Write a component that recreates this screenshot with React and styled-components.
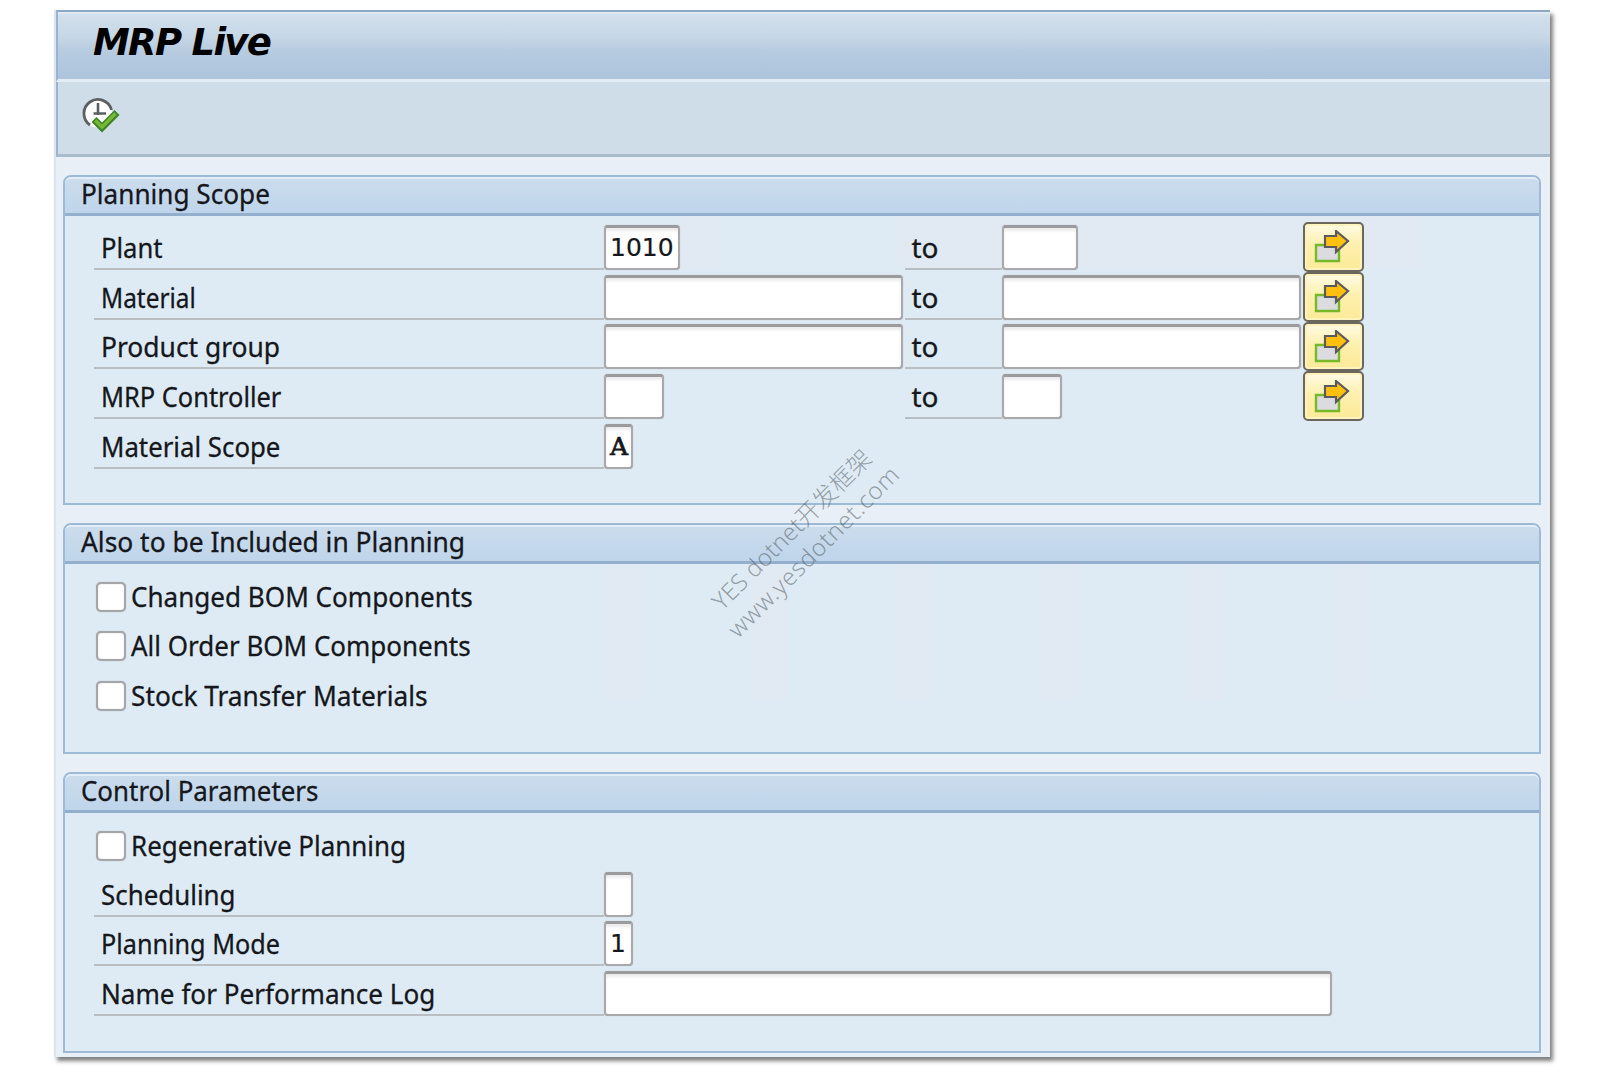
import React from "react";
import styled, { createGlobalStyle } from "styled-components";

const GlobalStyle = createGlobalStyle`
  * {
    box-sizing: border-box;
  }

  body {
    margin: 0;
    background: #ffffff;
    overflow: hidden;
  }
`;

const Page = styled.div`
  width: 1600px;
  height: 1077px;
  padding: 10px 50px 20px 54px;
  font-family: "Noto Sans", sans-serif;
  font-size: 28px;
  color: #15171c;
`;

const Window = styled.div`
  position: relative;
  width: 1496px;
  height: 1047px;
  border-left: 2px solid #dde3ef;
  background: #e8eff7;
  box-shadow: 3px 4px 4px rgba(0, 0, 0, 0.5);
`;

const TitleBar = styled.div`
  height: 72px;
  border-top: 2px solid #8ba9c0;
  border-left: 2px solid #9ab4cd;
  border-bottom: 3px solid #e2ecf4;
  background: linear-gradient(#e2ecf5 0, #d2e0ec 3px, #c5d6e5 26px, #b6cbe0 40px, #adc4dc 100%);
`;

const Title = styled.h1`
  margin: 0;
  padding: 9px 0 0 35px;
  font-family: "DejaVu Sans", sans-serif;
  font-size: 37px;
  font-weight: bold;
  font-style: oblique;
  line-height: 44px;
  letter-spacing: -1.7px;
  color: #000000;
`;

const Toolbar = styled.div`
  height: 75px;
  padding: 15px 0 0 24px;
  border-left: 2px solid #9ab4cd;
  border-bottom: 3px solid #a9bccb;
  background: #cfdde8;
`;

const Groups = styled.div`
  display: flex;
  flex-direction: column;
  gap: 18px;
  padding: 18px 9px 0 7px;
`;

const Group = styled.section`
  height: ${(props) => props.$height}px;
  border: 2px solid #9dbad7;
  border-radius: 8px 8px 0 0;
  background: #deebf4;
`;

const GroupTitle = styled.div`
  height: 39px;
  padding-left: 16px;
  border-top: 2px solid #e2edf7;
  border-bottom: 3px solid #93afcd;
  border-radius: 6px 6px 0 0;
  background: linear-gradient(#cbdcec, #bfd5eb);
  line-height: 29px;
  white-space: nowrap;
`;

const Rows = styled.div`
  padding: 4px 0 0 29px;
`;

const TintedSelectRows = styled(Rows)`
  background:
    linear-gradient(#e1e9f3, #e1e9f3) 616px 0 / 40px 52px no-repeat,
    linear-gradient(#e1e9f3, #e1e9f3) 832px 0 / 524px 52px no-repeat;
`;

const StripedRows = styled(Rows)`
  background: repeating-linear-gradient(90deg, #e1e9f3 0 37px, transparent 37px 145.7px) 540px 0 / 766px 136px
    no-repeat;
`;

const Row = styled.div`
  display: flex;
  align-items: flex-end;
  height: 49.75px;
`;

const Label = styled.div`
  width: ${(props) => props.$width}px;
  height: 46px;
  padding-left: ${(props) => props.$indent || 7}px;
  border-bottom: 2px solid #b9bec2;
  line-height: 47px;
  white-space: nowrap;
`;

const Text = styled.span`
  display: inline-block;
  white-space: nowrap;
  transform: scaleX(${(props) => props.$stretch || 1});
  transform-origin: left center;
  -webkit-text-stroke: 0.3px #15171c;
`;

const Slot = styled.div`
  width: ${(props) => props.$width}px;
`;

const Field = styled.div`
  width: ${(props) => props.$width}px;
  height: 45px;
  padding-left: 4px;
  border: 2px solid #a9a9ab;
  border-top: 3px solid #9b9b9d;
  border-radius: 4px;
  background: #ffffff;
  box-shadow:
    0 0 1px #a9a9ab,
    inset 0 3px 3px #ececee;
  font-family: ${(props) => (props.$serif ? '"DejaVu Serif", serif' : '"DejaVu Sans", sans-serif')};
  font-size: 25px;
  line-height: 40px;
  -webkit-text-stroke: ${(props) => (props.$serif ? 0.7 : 0.2)}px #15171c;
`;

const MoreButton = styled.button`
  position: relative;
  top: 2px;
  display: flex;
  align-items: center;
  justify-content: center;
  width: 61px;
  height: 49.75px;
  padding: 1px 4px 0 0;
  border: 2.5px solid #6b675c;
  border-radius: 5px;
  background: linear-gradient(#fffbe6, #fdf0ae 45%, #fdea98);
  box-shadow: inset 0 0 0 2px #fff3bd;
`;

const CheckRow = styled.div`
  display: flex;
  align-items: flex-start;
  height: 49.75px;
  padding: 13.5px 0 0 2px;
  line-height: 28px;
`;

const CheckBox = styled.div`
  width: 30px;
  height: 30px;
  margin-right: 5px;
  border: 2px solid #a6a6a8;
  border-radius: 5px;
  background: #ffffff;
  box-shadow:
    0 0 1px #a6a6a8,
    inset 0 0 1px #a6a6a8;
`;

const Watermark = styled.div`
  position: absolute;
  left: 606px;
  top: 499px;
  width: 280px;
  transform: rotate(-45deg);
  font-family: "Noto Sans", "Noto Sans CJK SC", sans-serif;
  font-weight: 300;
  font-size: 24px;
  line-height: 31px;
  text-align: center;
  white-space: nowrap;
  color: rgba(75, 85, 90, 0.52);
`;

const Site = styled.div`
  letter-spacing: 0.7px;
`;

const ExecuteIcon = () => (
  <svg width="38" height="38" viewBox="0 0 38 38" fill="none">
    <circle cx="16" cy="16.5" r="14" fill="#fff" />
    <path d="M8 28A14 14 0 1 1 29.5 13" stroke="#5d6063" strokeWidth="2.8" />
    <path d="M16 6v12M11.5 16.5h12.5" stroke="#5d6063" strokeWidth="2.6" />
    <path d="M12 22.5l8 8 15-15" stroke="#3f8424" strokeWidth="7" />
    <path d="M13.3 23.5l6.7 6.5 13.5-13.5" stroke="#74b93a" strokeWidth="3.5" />
  </svg>
);

const MoreIcon = () => (
  <svg width="36" height="34" viewBox="0 0 36 34">
    <path d="M2 15h23v16H2z" fill="#dcdce0" stroke="#76b82a" strokeWidth="2.4" />
    <path d="M11 6h11V1l12 10-12 11v-5H11z" fill="#fdc010" stroke="#5b5a5c" strokeWidth="2.2" />
  </svg>
);

const SelectRow = ({ label, stretch, value, width }) => (
  <Row>
    <Label $width={510}>
      <Text $stretch={stretch}>{label}</Text>
    </Label>
    <Slot $width={301}>
      <Field $width={width}>{value}</Field>
    </Slot>
    <Label $width={97} $indent={6.5}>
      <Text>to</Text>
    </Label>
    <Slot $width={301}>
      <Field $width={width} />
    </Slot>
    <MoreButton>
      <MoreIcon />
    </MoreButton>
  </Row>
);

const SingleRow = ({ label, stretch, value, width, serif }) => (
  <Row>
    <Label $width={510}>
      <Text $stretch={stretch}>{label}</Text>
    </Label>
    <Field $width={width} $serif={serif}>
      {value}
    </Field>
  </Row>
);

const Check = ({ label, stretch }) => (
  <CheckRow>
    <CheckBox />
    <Text $stretch={stretch}>{label}</Text>
  </CheckRow>
);

const App = () => {
  return (
    <>
      <GlobalStyle />
      <Page>
        <Window>
          <TitleBar>
            <Title>MRP Live</Title>
          </TitleBar>
          <Toolbar>
            <ExecuteIcon />
          </Toolbar>
          <Groups>
            <Group $height={330}>
              <GroupTitle>
                <Text $stretch={0.934}>Planning Scope</Text>
              </GroupTitle>
              <TintedSelectRows>
                <SelectRow label="Plant" stretch={0.915} value="1010" width={76} />
                <SelectRow label="Material" stretch={0.872} width={299} />
                <SelectRow label="Product group" stretch={0.943} width={299} />
                <SelectRow label="MRP Controller" stretch={0.907} width={60} />
                <SingleRow label="Material Scope" stretch={0.921} value="A" width={29} serif />
              </TintedSelectRows>
            </Group>
            <Group $height={231}>
              <GroupTitle>
                <Text $stretch={0.942}>Also to be Included in Planning</Text>
              </GroupTitle>
              <StripedRows>
                <Check label="Changed BOM Components" stretch={0.931} />
                <Check label="All Order BOM Components" stretch={0.928} />
                <Check label="Stock Transfer Materials" stretch={0.938} />
              </StripedRows>
            </Group>
            <Group $height={281}>
              <GroupTitle>
                <Text $stretch={0.925}>Control Parameters</Text>
              </GroupTitle>
              <Rows>
                <Check label="Regenerative Planning" stretch={0.926} />
                <SingleRow label="Scheduling" stretch={0.925} width={29} />
                <SingleRow label="Planning Mode" stretch={0.9} value="1" width={29} />
                <SingleRow label="Name for Performance Log" stretch={0.932} width={728} />
              </Rows>
            </Group>
          </Groups>
          <Watermark>
            <div>YES dotnet开发框架</div>
            <Site>www.yesdotnet.com</Site>
          </Watermark>
        </Window>
      </Page>
    </>
  );
};

export default App;
